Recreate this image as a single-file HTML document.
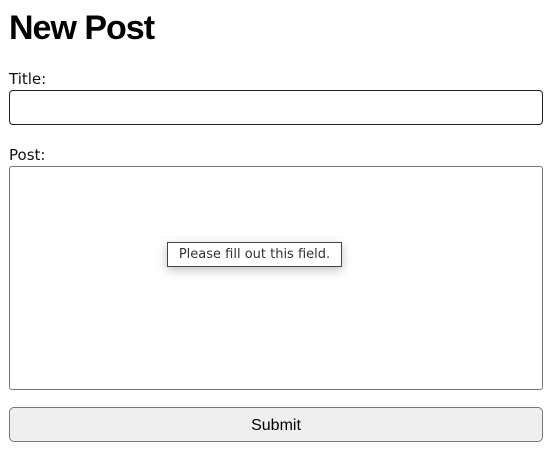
<!DOCTYPE html>
<html><head><style>
body{margin:0;background:#fff;font-family:"DejaVu Sans","Liberation Sans",sans-serif;position:relative;width:550px;height:454px;overflow:hidden}
h1{position:absolute;left:9px;top:8px;margin:0;font-family:"Liberation Sans",sans-serif;font-size:34px;font-weight:bold;letter-spacing:-1px;line-height:40px}
.lbl{position:absolute;left:9px;font-size:15px;color:#111;line-height:18px}
.box{position:absolute;left:9px;width:532px;border:1px solid #767676;border-radius:4px;box-sizing:content-box}
.btn{position:absolute;left:9px;top:407px;width:532px;height:33px;border:1px solid #767676;border-radius:5px;background:#efefef;font-family:"Liberation Sans",sans-serif;font-size:16px;text-align:center;line-height:35px;color:#000}
.tip{position:absolute;left:167px;top:242px;width:173px;height:23px;border:1px solid #444;background:#fff;font-size:13px;line-height:24px;text-align:center;color:#333;box-shadow:0 3px 10px rgba(0,0,0,.25)}
</style></head><body>
<h1>New Post</h1>
<div class="lbl" style="top:70px">Title:</div>
<div class="box" style="top:90px;height:33px;border-color:#222"></div>
<div class="lbl" style="top:146px">Post:</div>
<div class="box" style="top:166px;height:222px;border-radius:3px"></div>
<div class="btn">Submit</div>
<div class="tip">Please fill out this field.</div>
</body></html>
